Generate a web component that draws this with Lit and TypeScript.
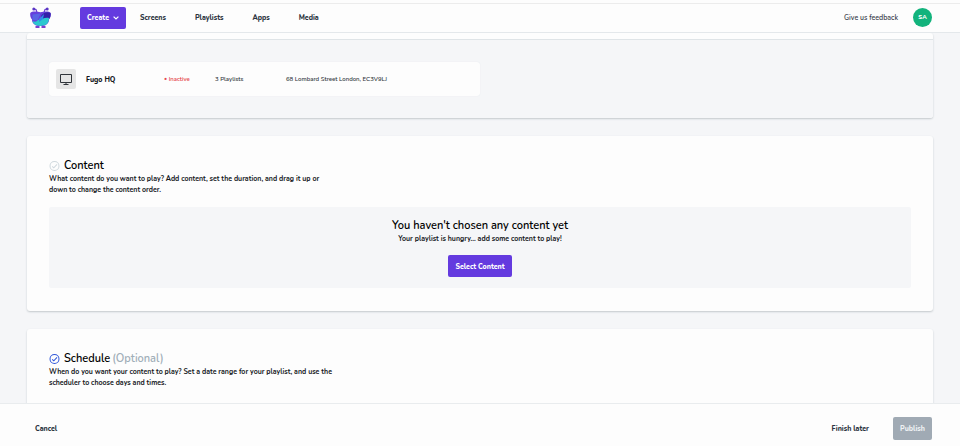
import { LitElement, html, css, svg } from "lit";
import { customElement, property } from "lit/decorators.js";
import { classMap } from "lit/directives/class-map.js";

const logo = svg`
  <path d="M7 5.500 6 2.500 3 1.800M14 5.500l1-3 3-.7" fill="none" stroke="#6a3fd0" stroke-width="1.200"/>
  <circle cx="3.800" cy="2" r="1.500" fill="#5b37c4"/>
  <circle cx="17.200" cy="2" r="1.500" fill="#5b37c4"/>
  <path d="M.3 6C2 3.800 7 4.300 10.500 5.200c3.500-.9 8.500-1.400 10.200.8.5 2.500-.4 4.800-1.700 6.500 0 4-3 6.500-8.500 6.500S2 16.500 2 12.500C.7 10.800-.2 8.500.3 6Z" fill="#6540dc"/>
  <path d="M2.500 7.500l8-1-3 7-5-.5Z" fill="#5964e4"/>
  <path d="M11 9c2-3 6-5 9.500-3 .5 2-.4 4.500-1.500 6l-8 1.500Z" fill="#3320a8"/>
  <path d="M8 13c4 0 6-3 11-2 0 5-3 8-8.500 8-4 0-7-1.500-8-5 2 1 4 1 5.500-1Z" fill="#2bc8cf"/>
  <path d="M9 12l5-5-1 5-4 3Z" fill="#318be8"/>
  <path d="M5.500 18.700h4V21h-4ZM11.500 18.700h4V21h-4Z" fill="#7a3fcf"/>`;

@customElement("check-heading")
export class CheckHeading extends LitElement {
  @property() label = "";
  @property() note = "";
  @property({ type: Boolean }) done = false;

  static styles = css`
    :host { display: block; }
    h2 {
      display: flex;
      align-items: center;
      gap: 4px;
      margin: 0;
      font-size: 11px;
      line-height: 14px;
      font-weight: 600;
      color: #000;
    }
    svg { width: 11px; height: 11px; color: #cfd8dd; }
    svg.done { color: #2f56d8; }
    .note { margin-left: -2px; color: #a0aeb8; }
  `;

  render() {
    return html`<h2>
      <svg class=${classMap({ done: this.done })} viewBox="0 0 22 24" fill="none" stroke="currentColor" stroke-width="2.200" aria-hidden="true">
        <circle cx="11" cy="11" r="9.800" />
        <path d="M6 11.500l3.500 3.500L16.500 7.500" />
      </svg>
      <span>${this.label}</span>
      ${this.note ? html`<span class="note">${this.note}</span>` : ""}
    </h2>`;
  }
}

@customElement("app-root")
export class AppRoot extends LitElement {
  static styles = css`
    :host {
      display: grid;
      grid-template-rows: auto minmax(0, 1fr) auto;
      height: 100vh;
      background: #f5f6f8;
      color: #15181c;
      font-family: Nunito, Lato, "Open Sans", sans-serif;
      font-size: 7px;
      font-weight: 700;
      line-height: 11px;
    }
    * { box-sizing: border-box; }
    button {
      border: 0;
      padding: 0;
      background: none;
      color: inherit;
      font: inherit;
      font-weight: 800;
    }
    a { color: inherit; text-decoration: none; }
    p { margin: 0; }
    header {
      background: #fdfdfd;
      border-bottom: 1px solid #e4e8eb;
    }
    .strip { height: 4px; border-bottom: 1px solid #ececec; }
    .bar {
      display: flex;
      align-items: center;
      height: 28px;
      padding: 0 28px 1px;
    }
    .logo { width: 21px; height: 21px; margin: 0 29px 0 2px; }
    nav {
      display: flex;
      align-items: center;
      gap: 29px;
      color: #2c3440;
      font-weight: 800;
    }
    .primary {
      display: inline-flex;
      align-items: center;
      justify-content: center;
      gap: 4px;
      height: 22px;
      padding: 0 7px;
      border-radius: 2px;
      background: #643adf;
      color: #fff;
    }
    nav .primary { margin-right: -15px; }
    .primary svg { width: 6px; height: 4px; }
    .feedback { margin-left: auto; color: #3b424c; font-weight: 600; }
    .avatar {
      display: grid;
      place-items: center;
      width: 19px;
      height: 19px;
      margin-left: 15px;
      border-radius: 50%;
      background: #12b37c;
      color: #fff;
      font-size: 6px;
    }
    main {
      display: flex;
      flex-direction: column;
      gap: 18px;
      padding: 0 27px;
      overflow: hidden;
    }
    section {
      flex: none;
      border-radius: 3px;
      background: #fdfdfd;
      box-shadow: 0 1px 2px #c3c8cc;
    }
    .screens { padding-top: 6px; }
    .screens-body {
      padding: 22px;
      border-top: 1px solid #dfe4e7;
      border-radius: 0 0 3px 3px;
      background: #f5f6f8;
    }
    .screen {
      display: grid;
      grid-template-columns: 21px 87px 51px 71px 1fr;
      align-items: center;
      width: 50%;
      height: 34px;
      padding: 0 7px;
      border-radius: 3px;
      background: #fdfdfd;
      box-shadow: 0 0 1px #dde2e5;
      color: #343a42;
      font-size: 6px;
      font-weight: 600;
    }
    .thumb {
      display: grid;
      place-items: center;
      width: 20px;
      height: 20px;
      border-radius: 2px;
      background: #e5e5e5;
    }
    .thumb svg { width: 12px; height: 11px; }
    .name { padding-left: 9px; font-size: 7px; font-weight: 800; color: #15181c; }
    .inactive { color: #e5434a; }
    .card { padding: 23px 22px; }
    .copy { max-width: 288px; }
    .card.content .copy { padding-right: 8px; }
    .empty {
      display: flex;
      flex-direction: column;
      align-items: center;
      margin-top: 12px;
      padding: 12px 0 11px;
      border-radius: 2px;
      background: #f5f6f8;
    }
    .empty h3 { margin: 0; font-size: 11px; line-height: 14px; font-weight: 600; color: #000; }
    .empty .primary { margin-top: 11px; }
    footer {
      display: flex;
      align-items: center;
      height: 43px;
      padding: 7px 28px 0 35px;
      border-top: 1px solid #e9ecee;
      background: #fdfdfd;
      color: #2c3440;
    }
    .later { margin-left: auto; }
    .publish {
      width: 39px;
      height: 23px;
      margin-left: 24px;
      border-radius: 2px;
      background: #a0aab4;
      color: #eef1f3;
    }
  `;

  render() {
    return html`
      <header>
        <div class="strip"></div>
        <div class="bar">
          <svg class="logo" viewBox="0 0 21 21" role="img" aria-label="Fugo">${logo}</svg>
          <nav>
            <button class="primary">
              Create
              <svg viewBox="0 0 6 4" fill="none" stroke="currentColor" stroke-width="1.200" aria-hidden="true"><path d="M.6.6 3 3 5.400.6" /></svg>
            </button>
            ${["Screens", "Playlists", "Apps", "Media"].map((t) => html`<a href="#">${t}</a>`)}
          </nav>
          <a class="feedback" href="#">Give us feedback</a>
          <button class="avatar">SA</button>
        </div>
      </header>
      <main>
        <section class="screens">
          <div class="screens-body">
            <div class="screen">
              <span class="thumb">
                <svg viewBox="0 0 12 11" fill="none" stroke="#30343a" aria-hidden="true">
                  <path d="M.5.500h11v8H.5ZM6 8.500v2M3.500 10.500h5" />
                </svg>
              </span>
              <span class="name">Fugo HQ</span>
              <span class="inactive">• Inactive</span>
              <span>3 Playlists</span>
              <span>68 Lombard Street London, EC3V9LJ</span>
            </div>
          </div>
        </section>
        <section class="card content">
          <check-heading label="Content"></check-heading>
          <p class="copy">What content do you want to play? Add content, set the duration, and drag it up or down to change the content order.</p>
          <div class="empty">
            <h3>You haven't chosen any content yet</h3>
            <p>Your playlist is hungry... add some content to play!</p>
            <button class="primary">Select Content</button>
          </div>
        </section>
        <section class="card">
          <check-heading label="Schedule" note="(Optional)" done></check-heading>
          <p class="copy">When do you want your content to play? Set a date range for your playlist, and use the scheduler to choose days and times.</p>
        </section>
      </main>
      <footer>
        <button>Cancel</button>
        <button class="later">Finish later</button>
        <button class="publish" disabled>Publish</button>
      </footer>
    `;
  }
}
